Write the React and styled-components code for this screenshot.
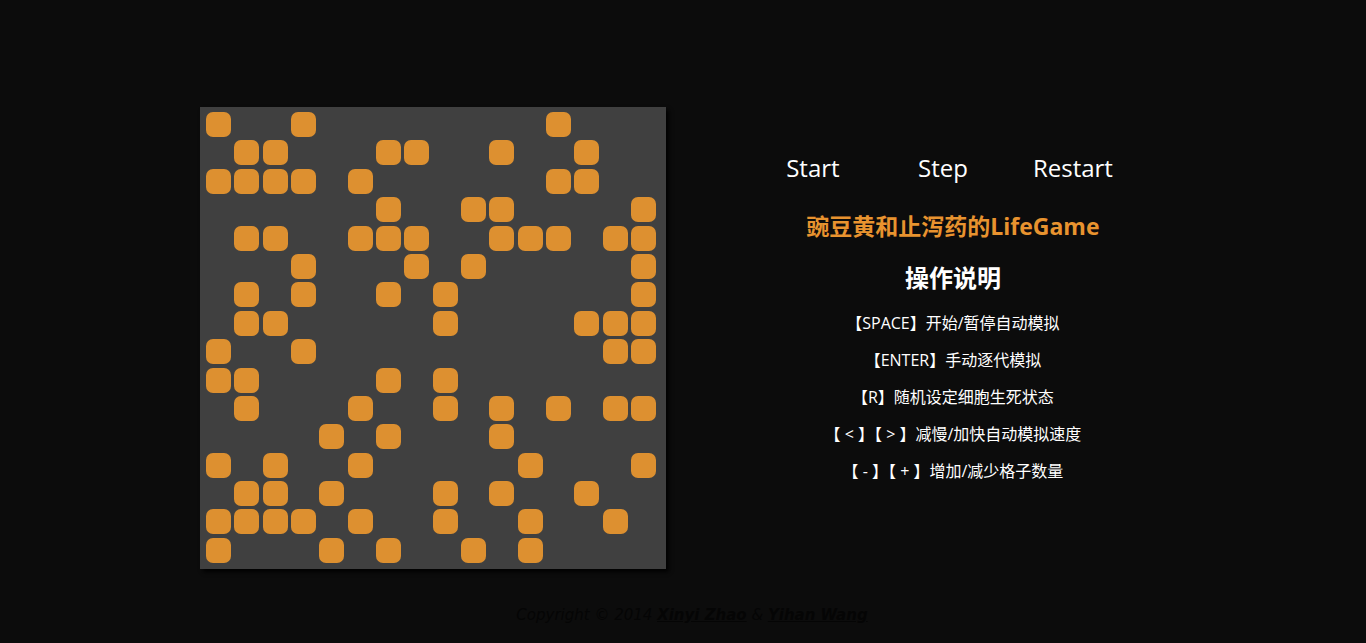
import React from 'react';
import styled, { createGlobalStyle } from 'styled-components';

const GlobalStyle = createGlobalStyle`
  html, body {
    margin: 0;
    padding: 0;
    background: #0c0c0c;
  }
  body {
    font-family: "Open Sans", "Noto Sans CJK SC", sans-serif;
  }
`;

const Page = styled.div`
  min-height: 643px;
  padding-top: 107px;
  box-sizing: border-box;
`;

const Container = styled.div`
  width: 966px;
  margin: 0 auto;
  display: flex;
  align-items: flex-start;
`;

const Board = styled.div`
  display: grid;
  grid-template-columns: repeat(16, 25px);
  grid-auto-rows: 25px;
  column-gap: 3.33px;
  row-gap: 3.4px;
  padding: 5px 10px 6px 6px;
  background: #404040;
  box-shadow: 3px 3px 4px rgba(0, 0, 0, 0.9);
`;

const Cell = styled.div`
  width: 25px;
  height: 25px;
  border-radius: 7px;
  background: ${(props) => (props.alive ? '#dd9030' : 'transparent')};
`;

const Panel = styled.div`
  width: 410px;
  margin-left: 82px;
  padding-top: 45px;
  display: flex;
  flex-direction: column;
  align-items: center;
`;

const ButtonRow = styled.div`
  align-self: flex-start;
  display: flex;
`;

const Button = styled.button`
  width: 130px;
  height: 32px;
  padding: 0;
  border: none;
  background: transparent;
  color: #ffffff;
  font-family: "Open Sans", sans-serif;
  font-size: 24px;
  line-height: 32px;
  cursor: pointer;
`;

const Title = styled.h1`
  margin: 27px 0 0;
  font-size: 23px;
  line-height: 30px;
  font-weight: bold;
  color: #e8932f;
  font-family: "Open Sans", "Noto Sans CJK SC", sans-serif;
`;

const SubTitle = styled.h2`
  margin: 20px 0 0;
  font-size: 24px;
  line-height: 32px;
  font-weight: bold;
  color: #ffffff;
  font-family: "Noto Sans CJK SC", sans-serif;
`;

const Help = styled.ul`
  list-style: none;
  margin: 12px 0 0;
  padding: 0;
  text-align: center;
`;

const HelpLine = styled.li`
  font-size: 16px;
  line-height: 37px;
  color: #ffffff;
  white-space: pre;
  font-family: "Open Sans", "Noto Sans CJK SC", sans-serif;
`;

const Footer = styled.footer`
  margin-top: 36px;
  padding-left: 18px;
  text-align: center;
  font-family: "DejaVu Sans", sans-serif;
  font-style: italic;
  font-size: 15px;
  line-height: 20px;
  color: #050505;

  a {
    color: #050505;
    font-weight: bold;
    text-decoration: underline;
  }
`;

const alive = [
  [0, 3, 12],
  [1, 2, 6, 7, 10, 13],
  [0, 1, 2, 3, 5, 12, 13],
  [6, 9, 10, 15],
  [1, 2, 5, 6, 7, 10, 11, 12, 14, 15],
  [3, 7, 9, 15],
  [1, 3, 6, 8, 15],
  [1, 2, 8, 13, 14, 15],
  [0, 3, 14, 15],
  [0, 1, 6, 8],
  [1, 5, 8, 10, 12, 14, 15],
  [4, 6, 10],
  [0, 2, 5, 11, 15],
  [1, 2, 4, 8, 10, 13],
  [0, 1, 2, 3, 5, 8, 11, 14],
  [0, 4, 6, 9, 11],
];

const helpLines = [
  '【SPACE】开始/暂停自动模拟',
  '【ENTER】手动逐代模拟',
  '【R】随机设定细胞生死状态',
  '【 < 】【 > 】减慢/加快自动模拟速度',
  '【 - 】【 + 】增加/减少格子数量',
];

const App = () => {
  return (
    <Page>
      <GlobalStyle />
      <Container>
        <Board>
          {alive.map((row, r) =>
            Array.from({ length: 16 }, (_, c) => (
              <Cell key={`${r}-${c}`} alive={row.includes(c) ? 1 : 0} />
            ))
          )}
        </Board>
        <Panel>
          <ButtonRow>
            <Button>Start</Button>
            <Button>Step</Button>
            <Button>Restart</Button>
          </ButtonRow>
          <Title>豌豆黄和止泻药的LifeGame</Title>
          <SubTitle>操作说明</SubTitle>
          <Help>
            {helpLines.map((line) => (
              <HelpLine key={line}>{line}</HelpLine>
            ))}
          </Help>
        </Panel>
      </Container>
      <Footer>
        Copyright © 2014 <a href="#">Xinyi Zhao</a> &amp; <a href="#">Yihan Wang</a>
      </Footer>
    </Page>
  );
};

export default App;
